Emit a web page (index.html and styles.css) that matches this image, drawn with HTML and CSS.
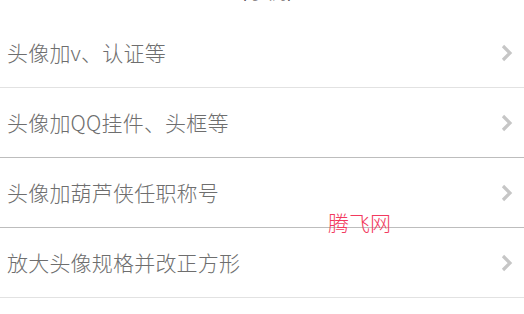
FILE: index.html
```html
<!DOCTYPE html>
<html lang="zh-CN">
<head>
<meta charset="utf-8">
<link rel="stylesheet" href="styles.css">
</head>
<body>
<div class="page">
  <div class="top"><span class="top-text">（示例）</span></div>
  <ul class="list">
    <li class="row light">
      <span class="label">头像加v、认证等</span>
      <svg class="chev" width="14" height="20" viewBox="0 0 14 20"><path d="M3 3 L10 10 L3 17" fill="none" stroke="#c6c6c6" stroke-width="3.2"/></svg>
    </li>
    <li class="row dark">
      <span class="label">头像加QQ挂件、头框等</span>
      <svg class="chev" width="14" height="20" viewBox="0 0 14 20"><path d="M3 3 L10 10 L3 17" fill="none" stroke="#c6c6c6" stroke-width="3.2"/></svg>
    </li>
    <li class="row dark">
      <span class="label">头像加葫芦侠任职称号</span>
      <svg class="chev" width="14" height="20" viewBox="0 0 14 20"><path d="M3 3 L10 10 L3 17" fill="none" stroke="#c6c6c6" stroke-width="3.2"/></svg>
    </li>
    <li class="row light">
      <span class="label">放大头像规格并改正方形</span>
      <svg class="chev" width="14" height="20" viewBox="0 0 14 20"><path d="M3 3 L10 10 L3 17" fill="none" stroke="#c6c6c6" stroke-width="3.2"/></svg>
    </li>
  </ul>
  <div class="watermark">腾飞网</div>
</div>
</body>
</html>
```
FILE: styles.css
```css
* { box-sizing: border-box; }
html, body { margin: 0; padding: 0; background: #fff; }
body { font-family: "Noto Sans CJK SC", "Noto Sans", sans-serif; }
.page { position: relative; width: 524px; height: 314px; overflow: hidden; }
.top { height: 18px; overflow: hidden; display: flex; justify-content: center; }
.top-text { font-size: 20px; line-height: 20px; color: #3a2f35; margin-top: -19px; padding-left: 10px; }
.list { list-style: none; margin: 0; padding: 0; }
.row {
  height: 70px;
  display: flex;
  align-items: center;
  justify-content: space-between;
  padding: 0 10px 0 7px;
  border-bottom: 1px solid #e2e2e2;
}
.row.dark { border-bottom-color: #bdbdbd; }
.row.light { border-bottom-color: #e2e2e2; }
.label { font-size: 21px; font-weight: 300; color: #6e6e6e; letter-spacing: 0.2px; padding-bottom: 1px; }
.chev { display: block; }
.watermark {
  position: absolute;
  left: 328px;
  top: 208px;
  font-size: 21px;
  font-weight: 300;
  line-height: 28px;
  color: #f23a5e;
}
```
